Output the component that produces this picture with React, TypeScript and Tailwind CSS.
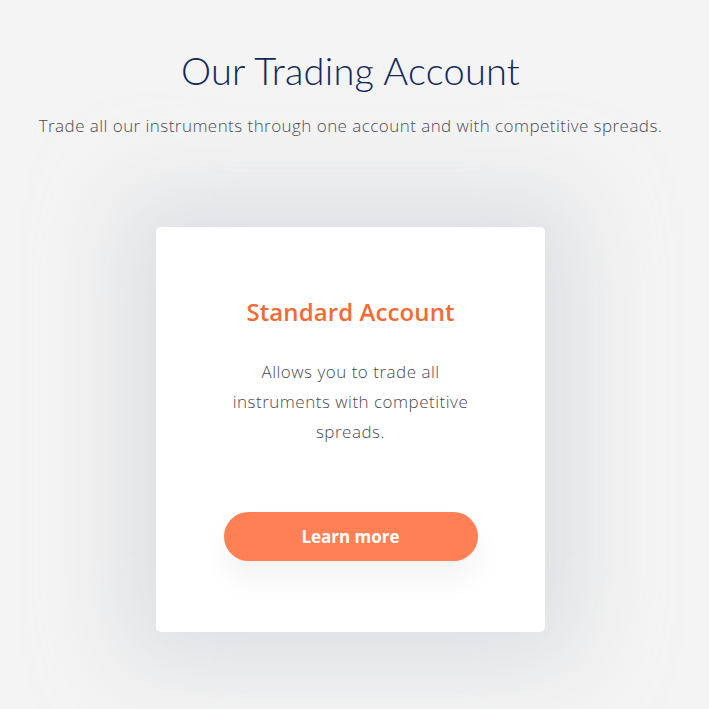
import React from "react";

export default function App() {
  return (
    <div className="min-h-[709px] w-full bg-[#f4f4f4] font-['Open_Sans',sans-serif] overflow-hidden">
      <div className="flex flex-col items-center pt-[46px] pr-[8px]">
        <h2 className="font-['Lato',sans-serif] text-[38px] leading-[48px] font-light text-[#13285c] tracking-[0.2px]">
          Our Trading Account
        </h2>
        <p className="mt-[22px] text-[17px] leading-[20px] font-light tracking-[0.45px] text-[#4a4a55] whitespace-nowrap">
          Trade all our instruments through one account and with competitive spreads.
        </p>

        <div className="mt-[91px] w-[389px] h-[405px] rounded-[5px] bg-white shadow-[0_0_90px_30px_rgba(200,204,212,0.55)] flex flex-col items-center pt-[70px]">
          <h3 className="text-[24px] leading-[30px] font-semibold text-[#f26a36] tracking-[0.1px]">
            Standard Account
          </h3>
          <p className="mt-[30px] w-[260px] text-center text-[17px] leading-[30px] font-light tracking-[0.5px] text-[#4a4a50]">
            Allows you to trade all instruments with competitive spreads.
          </p>
          <button className="mt-[65px] w-[254px] h-[49px] rounded-full bg-[#ff8055] text-white text-[17px] font-bold shadow-[0_18px_30px_rgba(0,0,0,0.05)]">
            Learn more
          </button>
        </div>
      </div>
    </div>
  );
}
